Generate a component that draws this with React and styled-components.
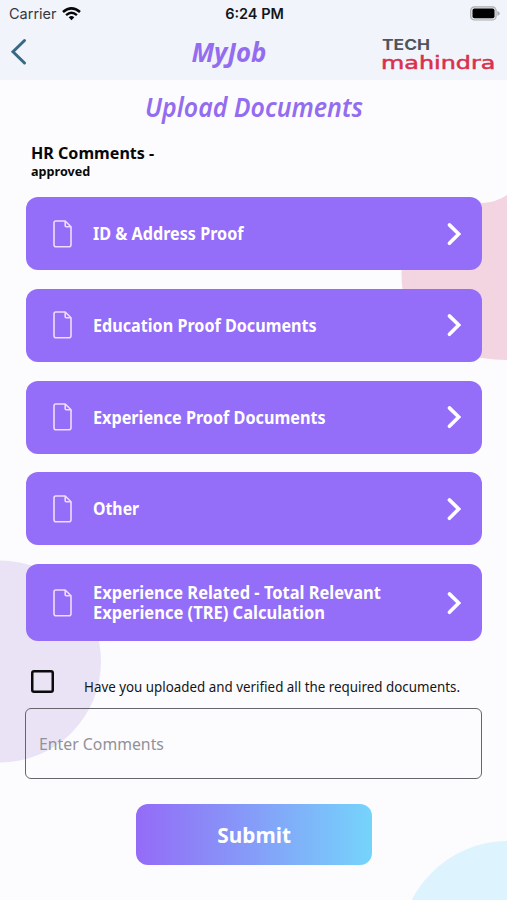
import React from "react";
import styled, { createGlobalStyle } from "styled-components";

const GlobalStyle = createGlobalStyle`
  * { box-sizing: border-box; }
  body { margin: 0; background: #fcfcfe; font-family: "Noto Sans", sans-serif; }
`;

const Screen = styled.main`
  position: relative;
  width: 507px;
  height: 900px;
  overflow: hidden;
  isolation: isolate;
  background: #fcfcfe;
`;

const Backdrop = styled.svg`
  position: absolute;
  inset: 0;
  z-index: -1;
`;

const Header = styled.header`
  height: 80px;
  background: #f1f4fb;
`;

const StatusBar = styled.div`
  display: grid;
  grid-template-columns: 1fr auto 1fr;
  align-items: center;
  height: 27px;
  padding: 0 7px 0 9px;
  color: #151619;
  font-family: Inter, sans-serif;
  svg { display: block; }
`;

const Carrier = styled.div`
  display: flex;
  align-items: center;
  gap: 5px;
  color: #35373b;
`;

const BatterySlot = styled.div`
  justify-self: end;
`;

const NavBar = styled.div`
  display: grid;
  grid-template-columns: 114px 1fr 114px;
  align-items: center;
  height: 50px;
  padding: 0 11px 0 10px;
`;

const BackButton = styled.button`
  justify-self: start;
  width: 20px;
  height: 28px;
  padding: 0;
  border: 0;
  background: none;
  svg { display: block; }
`;

const NavTitle = styled.div`
  display: flex;
  justify-content: center;
  margin-left: -48px;
`;

const LogoSlot = styled.div`
  justify-self: end;
  padding-top: 2px;
  svg { display: block; overflow: visible; }
`;

/* Glyphs are narrowed or widened horizontally around the chosen origin. */
const Label = styled.span`
  display: inline-block;
  white-space: nowrap;
  font-size: ${(p) => p.$size}px;
  font-weight: ${(p) => p.$weight || 400};
  font-style: ${(p) => (p.$italic ? "italic" : "normal")};
  line-height: ${(p) => p.$line || 20}px;
  color: ${(p) => p.$color || "inherit"};
  transform: scaleX(${(p) => p.$stretch || 1});
  transform-origin: ${(p) => p.$origin || "left"} center;
`;

const Heading = styled.h1`
  display: flex;
  justify-content: center;
  margin: 0;
  padding-top: 10px;
  height: 62px;
`;

const Comments = styled.section`
  display: flex;
  flex-direction: column;
  align-items: flex-start;
  height: 55.4px;
  padding-left: 31px;
  color: #08080a;
`;

const List = styled.div`
  display: flex;
  flex-direction: column;
  gap: 18.6px;
  padding: 0 25.5px 0 26px;
`;

const Row = styled.button`
  display: flex;
  align-items: center;
  height: ${(p) => (p.$tall ? 77.6 : 73)}px;
  padding: 0 20px 0 27px;
  border: 0;
  border-radius: 12px;
  background: #946df8;
  color: #fff;
  font-family: inherit;
  text-align: left;
  svg { flex: none; display: block; }
`;

const RowText = styled.span`
  flex: 1;
  display: flex;
  flex-direction: column;
  align-items: flex-start;
  margin-left: 20.5px;
  padding-top: 1.5px;
`;

const Confirm = styled.label`
  display: flex;
  height: 67px;
  padding: 28px 0 0 31px;
`;

const CheckBox = styled.input`
  appearance: none;
  width: 23px;
  height: 23px;
  margin: 1px 30px 0 0;
  border: 0;
  box-shadow: inset 0 0 0 2.5px #0b0a0d;
  border-radius: 3px;
`;

const ConfirmText = styled.span`
  padding-top: 6px;
  color: #161518;
`;

const CommentField = styled.div`
  display: flex;
  align-items: center;
  height: 71px;
  margin: 0 25px;
  padding-left: 12.5px;
  border: 1px solid #66656b;
  border-radius: 6px;
`;

const Submit = styled.button`
  display: flex;
  align-items: center;
  justify-content: center;
  width: 236px;
  height: 61px;
  margin: 25px 0 0 136px;
  padding: 0;
  border: 0;
  border-radius: 12px;
  background: linear-gradient(90deg, #946bf7, #8796f8 43%, #75d4fb);
  color: #fff;
  font-family: inherit;
`;

const FileIcon = () => (
  <svg width="19" height="28" viewBox="0 0 19 28" fill="none" stroke="#f0dcff" strokeWidth="1.6" strokeLinejoin="round">
    <path d="M2.7 1H12.2L18 6.8V24.8Q18 26.8 16 26.8H3Q1 26.8 1 24.8V3Q1 1 2.7 1Z" />
    <path d="M12.2 1V5.8Q12.2 6.8 13.2 6.8H18" />
  </svg>
);

const Chevron = () => (
  <svg width="16" height="24" viewBox="0 0 16 24" fill="none" stroke="#fff" strokeWidth="3.6" strokeLinecap="round">
    <path d="M3.4 2.9L12.7 12L3.4 21.3" strokeLinejoin="miter" />
  </svg>
);

const WifiIcon = () => (
  <svg width="19" height="14" viewBox="0 0 19 14" fill="none" stroke="#050608" strokeWidth="2.5">
    <path d="M1 5Q9.5 -2.3 18 5" />
    <path d="M4.1 8.1Q9.5 3.5 14.9 8.1" />
    <path d="M6.7 10.2Q9.5 8 12.3 10.2L9.5 13.3Z" fill="#050608" stroke="none" />
  </svg>
);

const BatteryIcon = () => (
  <svg width="30" height="15" viewBox="0 0 30 15">
    <rect x=".7" y=".8" width="25.4" height="13.2" rx="3.8" fill="#e3e5ea" stroke="#aaadb3" strokeWidth="1.2" />
    <rect x="2.5" y="2.6" width="22" height="9.6" rx="2" fill="#020203" />
    <path d="M27.4 5Q29.7 5.6 29.7 7.4T27.4 9.8Z" fill="#aaadb3" />
  </svg>
);

const Logo = () => (
  <svg width="114" height="34" viewBox="0 0 114 34" role="img" aria-label="Tech Mahindra">
    <text x="0" y="14.3" fontFamily="Inter, sans-serif" fontWeight="700" fontSize="14.4" fill="#50545b" textLength="48" lengthAdjust="spacingAndGlyphs">TECH</text>
    <text x="-1" y="32.8" fontFamily="DejaVu Sans, sans-serif" fontSize="18.4" fill="#d9304c" stroke="#d9304c" strokeWidth=".5" textLength="114.5" lengthAdjust="spacingAndGlyphs">mahindra</text>
  </svg>
);

const documents = [
  [{ text: "ID & Address Proof", stretch: 0.95 }],
  [{ text: "Education Proof Documents", stretch: 0.95 }],
  [{ text: "Experience Proof Documents", stretch: 0.953 }],
  [{ text: "Other", stretch: 0.93 }],
  [
    { text: "Experience Related - Total Relevant", stretch: 0.968 },
    { text: "Experience (TRE) Calculation", stretch: 0.97 },
  ],
];

export default function App() {
  return (
    <Screen>
      <GlobalStyle />
      <Backdrop width="507" height="900" viewBox="0 0 507 900" aria-hidden="true">
        <path d="M507 195Q497 202 482 203L420 220Q401 243 401.5 275C402 325 430 353 482 358Q494 360 507 360Z" fill="#f2d5e0" />
        <circle cx="0" cy="661.5" r="101" fill="#e9e3f5" />
        <circle cx="508" cy="949" r="108" fill="#ddf3fd" />
      </Backdrop>
      <Header>
        <StatusBar>
          <Carrier>
            <Label $size={14.5}>Carrier</Label>
            <WifiIcon />
          </Carrier>
          <Label $size={14.5} $weight={600} $origin="center">6:24 PM</Label>
          <BatterySlot><BatteryIcon /></BatterySlot>
        </StatusBar>
        <NavBar>
          <BackButton aria-label="Back">
            <svg width="18" height="28" viewBox="0 0 18 28" fill="none" stroke="#386983" strokeWidth="3" strokeLinecap="round">
              <path d="M14.5 2.5L3 13.8L14.5 25" />
            </svg>
          </BackButton>
          <NavTitle>
            <Label $size={26} $weight={700} $italic $line={34} $color="#946cf0" $stretch={0.99} $origin="center">MyJob</Label>
          </NavTitle>
          <LogoSlot><Logo /></LogoSlot>
        </NavBar>
      </Header>
      <Heading>
        <Label $size={26.5} $weight={600} $italic $line={34} $color="#946cf0" $stretch={0.94} $origin="center">Upload Documents</Label>
      </Heading>
      <Comments>
        <Label $size={16.5} $weight={700} $line={21} $stretch={0.975}>HR Comments -</Label>
        <Label $size={13} $weight={700} $line={16} $stretch={0.97}>approved</Label>
      </Comments>
      <List>
        {documents.map((lines) => (
          <Row key={lines[0].text} $tall={lines.length > 1}>
            <FileIcon />
            <RowText>
              {lines.map((line) => (
                <Label key={line.text} $size={17} $weight={700} $line={20.5} $stretch={line.stretch}>{line.text}</Label>
              ))}
            </RowText>
            <Chevron />
          </Row>
        ))}
      </List>
      <Confirm>
        <CheckBox type="checkbox" />
        <ConfirmText>
          <Label $size={15} $stretch={0.891}>Have you uploaded and verified all the required documents.</Label>
        </ConfirmText>
      </Confirm>
      <CommentField>
        <Label $size={17} $color="#929197" $stretch={0.93}>Enter Comments</Label>
      </CommentField>
      <Submit>
        <Label $size={21} $weight={700} $line={28} $origin="center" $stretch={0.99}>Submit</Label>
      </Submit>
    </Screen>
  );
}
